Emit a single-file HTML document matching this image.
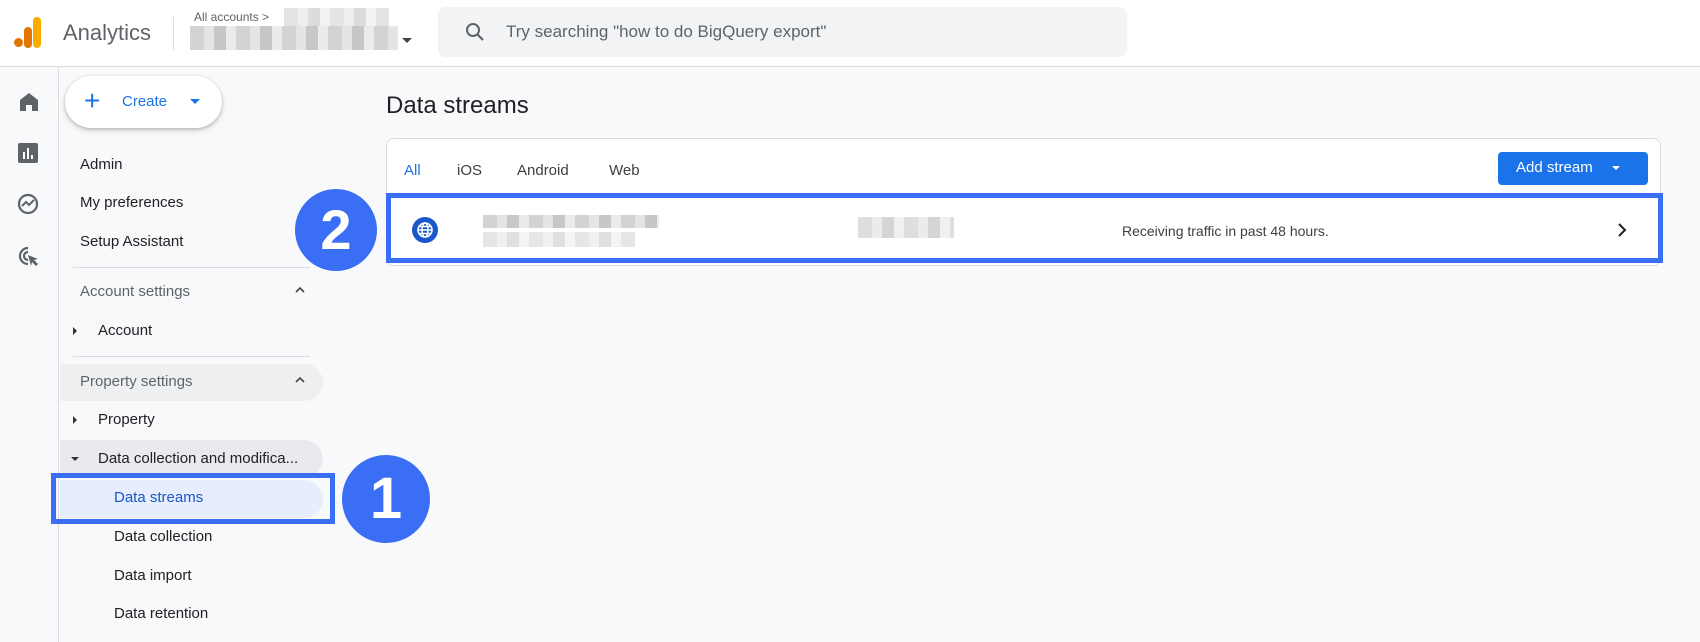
<!DOCTYPE html>
<html><head><meta charset="utf-8"><style>
*{box-sizing:border-box;margin:0;padding:0}
body{width:1700px;height:642px;overflow:hidden;background:#f8f9fa;font-family:"Liberation Sans",Arial,sans-serif;position:relative;color:#202124}
.a{position:absolute}
.t{position:absolute;white-space:nowrap;font-size:15px;line-height:20px}
.blur{position:absolute;background:repeating-linear-gradient(90deg,#c8c8c8 0 14px,#dedede 14px 24px,#b9b9b9 24px 36px,#e6e6e6 36px 46px)}
</style></head><body>
<div class="a" style="left:0;top:0;width:1700px;height:67px;background:#fff;border-bottom:1px solid #dadce0"></div>
<div class="a" style="left:14px;top:38px;width:9px;height:9px;border-radius:50%;background:#e37400"></div>
<div class="a" style="left:24px;top:27px;width:8px;height:21px;border-radius:4px;background:#e37400"></div>
<div class="a" style="left:33px;top:17px;width:8px;height:31px;border-radius:4px;background:#f9ab00"></div>
<div class="t" style="left:63px;top:20px;font-size:22px;line-height:26px;color:#5f6368">Analytics</div>
<div class="a" style="left:173px;top:17px;width:1px;height:33px;background:#dadce0"></div>
<div class="t" style="left:194px;top:9px;font-size:12px;line-height:16px;color:#5f6368">All accounts &gt;</div>
<div class="blur" style="left:284px;top:8px;width:105px;height:18px;opacity:.5"></div>
<div class="blur" style="left:190px;top:26px;width:208px;height:24px;opacity:.8"></div>
<div class="a" style="left:402px;top:38px;border-left:5px solid transparent;border-right:5px solid transparent;border-top:5px solid #444"></div>
<div class="a" style="left:438px;top:7px;width:689px;height:50px;background:#f1f3f4;border-radius:8px"></div>
<svg class="a" style="left:463px;top:20px" width="24" height="24" viewBox="0 0 24 24"><circle cx="10" cy="10" r="6" fill="none" stroke="#5f6368" stroke-width="2"/><path d="M14.5 14.5L20 20" stroke="#5f6368" stroke-width="2.2"/></svg>
<div class="t" style="left:506px;top:22px;font-size:17px;color:#5f6368">Try searching "how to do BigQuery export"</div>
<div class="a" style="left:58px;top:67px;width:1px;height:575px;background:#dadce0"></div>
<svg class="a" style="left:18px;top:92px" width="22" height="20" viewBox="0 0 22 20"><path d="M11 1L2 8V19H8V13H14V19H20V8Z" fill="#5f6368"/></svg>
<svg class="a" style="left:18px;top:143px" width="20" height="20" viewBox="0 0 20 20"><rect x="0" y="0" width="20" height="20" rx="2" fill="#5f6368"/><rect x="5" y="9" width="2" height="7" fill="#fff"/><rect x="9" y="5" width="2" height="11" fill="#fff"/><rect x="13" y="12" width="2" height="4" fill="#fff"/></svg>
<svg class="a" style="left:17px;top:193px" width="22" height="22" viewBox="0 0 22 22"><circle cx="11" cy="11" r="9" fill="none" stroke="#5f6368" stroke-width="2.2"/><path d="M5 13l4-4 3 3 5-5" fill="none" stroke="#5f6368" stroke-width="2"/></svg>
<svg class="a" style="left:17px;top:245px" width="24" height="24" viewBox="0 0 24 24"><path d="M11 3a8 8 0 1 0 0 16M11 7a4 4 0 1 0 0 8" fill="none" stroke="#5f6368" stroke-width="2.2"/><path d="M11 10l10 4-4 1 4 4-2 2-4-4-1 4z" fill="#5f6368"/></svg>
<div class="a" style="left:65px;top:76px;width:157px;height:52px;background:#fff;border-radius:26px;box-shadow:0 1px 3px rgba(60,64,67,.3),0 3px 6px rgba(60,64,67,.15)"></div>
<div class="t" style="left:84px;top:88px;font-size:28px;line-height:26px;color:#1a73e8;font-weight:300">+</div>
<div class="t" style="left:122px;top:92px;color:#1a73e8;font-size:15px">Create</div>
<div class="a" style="left:190px;top:99px;border-left:5px solid transparent;border-right:5px solid transparent;border-top:5px solid #1a73e8"></div>
<div class="t" style="left:80px;top:155px">Admin</div>
<div class="t" style="left:80px;top:193px">My preferences</div>
<div class="t" style="left:80px;top:232px">Setup Assistant</div>
<div class="a" style="left:73px;top:267px;width:237px;height:1px;background:#dadce0"></div>
<div class="t" style="left:80px;top:282px;color:#5f6368">Account settings</div>
<svg class="a" style="left:294px;top:286px" width="12" height="8"><path d="M2 6l4-4 4 4" fill="none" stroke="#444" stroke-width="1.6"/></svg>
<div class="a" style="left:73px;top:327px;border-top:4px solid transparent;border-bottom:4px solid transparent;border-left:4px solid #333"></div>
<div class="t" style="left:98px;top:321px">Account</div>
<div class="a" style="left:73px;top:356px;width:237px;height:1px;background:#dadce0"></div>
<div class="a" style="left:60px;top:364px;width:263px;height:37px;background:#eeeff1;border-radius:0 19px 19px 0"></div>
<div class="t" style="left:80px;top:372px;color:#5f6368">Property settings</div>
<svg class="a" style="left:294px;top:376px" width="12" height="8"><path d="M2 6l4-4 4 4" fill="none" stroke="#444" stroke-width="1.6"/></svg>
<div class="a" style="left:73px;top:416px;border-top:4px solid transparent;border-bottom:4px solid transparent;border-left:4px solid #333"></div>
<div class="t" style="left:98px;top:410px">Property</div>
<div class="a" style="left:60px;top:440px;width:263px;height:38px;background:#e8eaed;border-radius:0 19px 19px 0"></div>
<div class="a" style="left:71px;top:457px;border-left:4px solid transparent;border-right:4px solid transparent;border-top:4px solid #333"></div>
<div class="t" style="left:98px;top:449px">Data collection and modifica...</div>
<div class="a" style="left:60px;top:480px;width:263px;height:38px;background:#e6eefd;border-radius:0 19px 19px 0"></div>
<div class="t" style="left:114px;top:488px;color:#1a57c8">Data streams</div>
<div class="a" style="left:51px;top:473px;width:284px;height:51px;border:5px solid #3a6ef5"></div>
<div class="t" style="left:114px;top:527px">Data collection</div>
<div class="t" style="left:114px;top:566px">Data import</div>
<div class="t" style="left:114px;top:604px">Data retention</div>
<div class="a" style="left:342px;top:455px;width:88px;height:88px;border-radius:50%;background:#3a6ef5;color:#fff;font-size:58px;line-height:88px;text-align:center;font-weight:bold">1</div>
<div class="a" style="left:295px;top:189px;width:82px;height:82px;border-radius:50%;background:#3a6ef5;color:#fff;font-size:56px;line-height:82px;text-align:center;font-weight:bold">2</div>
<div class="t" style="left:386px;top:92px;font-size:24px;line-height:28px">Data streams</div>
<div class="a" style="left:386px;top:138px;width:1275px;height:128px;background:#fff;border:1px solid #dadce0;border-radius:8px"></div>
<div class="t" style="left:404px;top:161px;color:#1a73e8">All</div>
<div class="t" style="left:457px;top:161px;color:#3c4043">iOS</div>
<div class="t" style="left:517px;top:161px;color:#3c4043">Android</div>
<div class="t" style="left:609px;top:161px;color:#3c4043">Web</div>
<div class="a" style="left:1498px;top:152px;width:150px;height:33px;background:#1a73e8;border-radius:4px"></div>
<div class="t" style="left:1516px;top:158px;color:#fff">Add stream</div>
<div class="a" style="left:1612px;top:166px;border-left:4px solid transparent;border-right:4px solid transparent;border-top:4px solid #fff"></div>
<div class="a" style="left:386px;top:193px;width:1277px;height:70px;border:5px solid #3a6ef5;background:#fff"></div>
<div class="a" style="left:412px;top:217px;width:26px;height:26px;border-radius:50%;background:#1a57c8"></div>
<svg class="a" style="left:416px;top:221px" width="18" height="18" viewBox="0 0 18 18"><g fill="none" stroke="#fff" stroke-width="1.5"><circle cx="9" cy="9" r="7"/><ellipse cx="9" cy="9" rx="3" ry="7"/><path d="M2 9h14M3 5.5h12M3 12.5h12"/></g></svg>
<div class="blur" style="left:483px;top:215px;width:176px;height:13px;opacity:.8"></div>
<div class="blur" style="left:483px;top:232px;width:152px;height:15px;opacity:.45"></div>
<div class="blur" style="left:858px;top:217px;width:96px;height:21px;opacity:.6"></div>
<div class="t" style="left:1122px;top:221px;font-size:14px;color:#3c4043">Receiving traffic in past 48 hours.</div>
<svg class="a" style="left:1616px;top:222px" width="12" height="16"><path d="M3 2l6 6-6 6" fill="none" stroke="#202124" stroke-width="2"/></svg>
</body></html>
